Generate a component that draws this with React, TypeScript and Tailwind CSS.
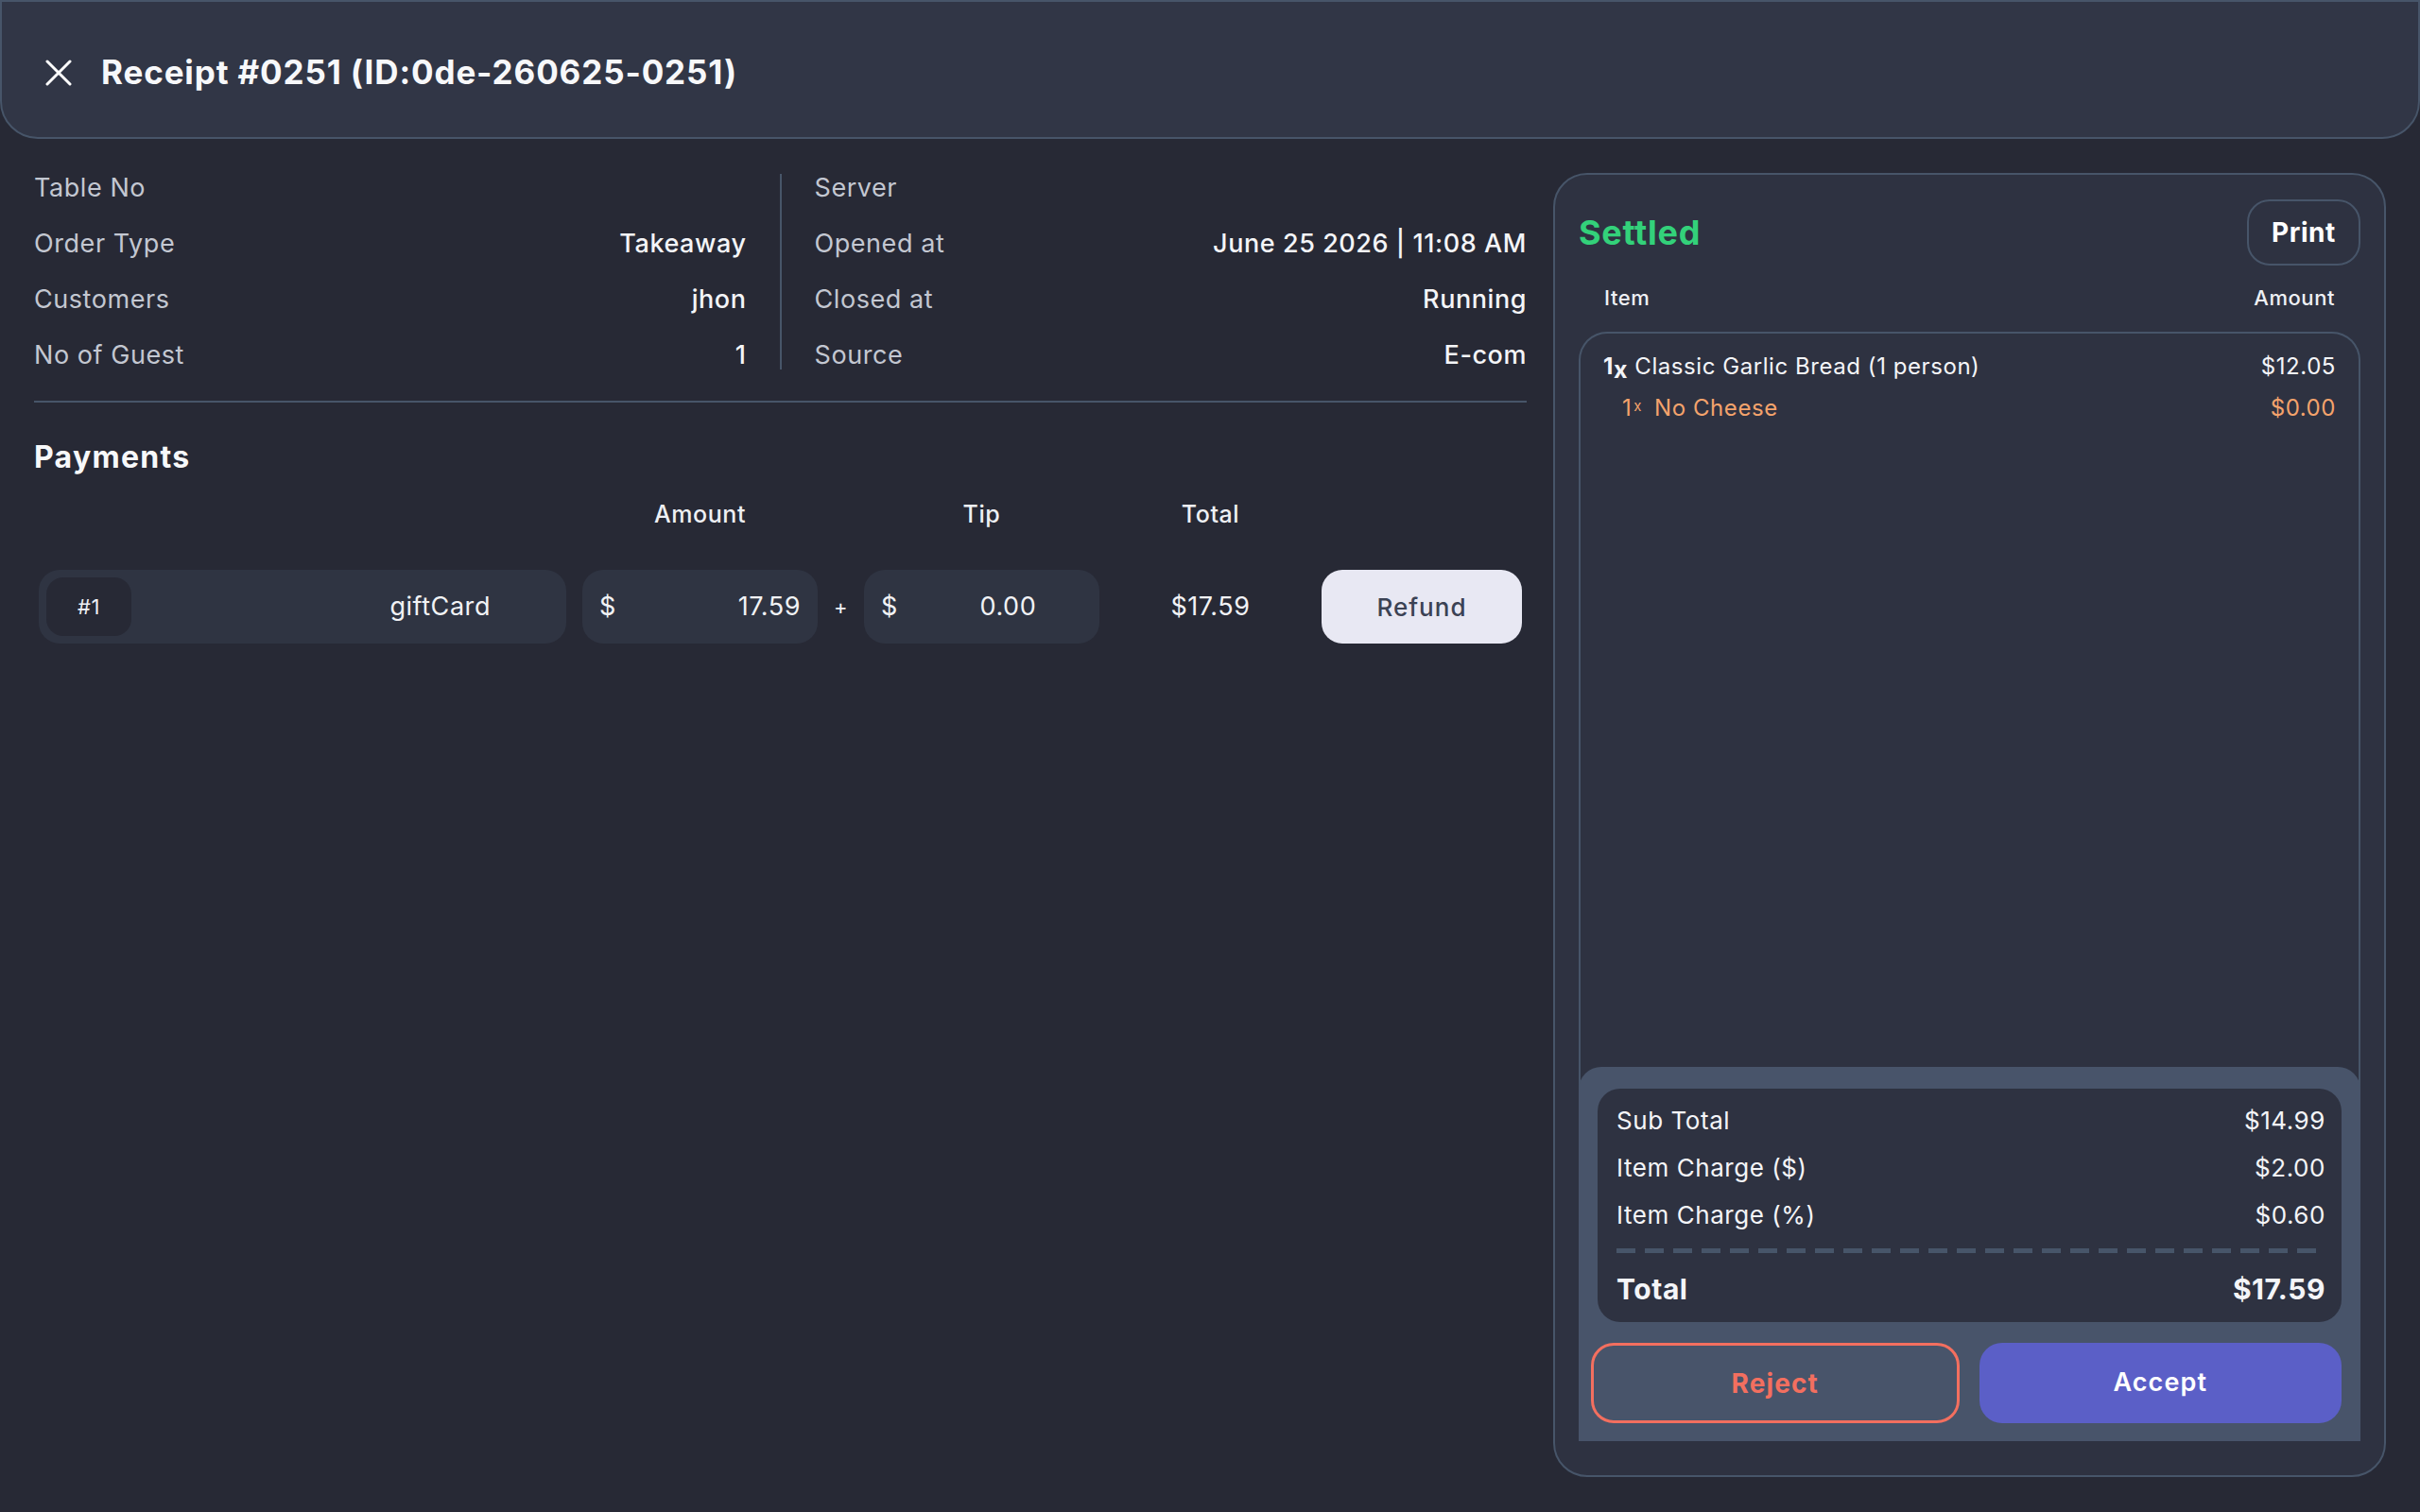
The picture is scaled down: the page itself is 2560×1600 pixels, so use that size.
import React from "react";

const font = { fontFamily: 'Inter, "Noto Sans", sans-serif' };

function InfoRow({ label, value }: { label: string; value?: string }) {
  return (
    <div className="flex items-center justify-between h-[30px] leading-[30px]">
      <span className="text-[#c3c7d1]">{label}</span>
      <span className="text-[#f4f5f8] font-medium">{value ?? ""}</span>
    </div>
  );
}

export default function App() {
  return (
    <div
      className="w-[2560px] h-[1600px] bg-[#272935] flex flex-col overflow-hidden text-white tracking-[0.035em]"
      style={font}
    >
      {/* Header */}
      <div className="h-[147px] shrink-0 bg-[#313646] border-[2px] border-[#475569] rounded-b-[40px] flex items-center pl-[46px] pt-[6px] gap-[31px]">
        <svg width="28" height="28" viewBox="0 0 28 28" className="shrink-0">
          <path d="M2 2 L26 26 M26 2 L2 26" stroke="#ffffff" strokeWidth="3" strokeLinecap="round" />
        </svg>
        <h1 className="text-[35px] font-bold tracking-[0.025em] text-[#f7f8fa]">Receipt #0251 (ID:0de-260625-0251)</h1>
      </div>

      {/* Main */}
      <div className="flex-1 flex px-[36px] pt-[36px] pb-[37px] gap-[28px] min-h-0">
        {/* Left */}
        <div className="w-[1579px] shrink-0 flex flex-col">
          <div className="flex text-[27px] pt-[1px]">
            <div className="flex-1 flex flex-col gap-[29px]">
              <InfoRow label="Table No" />
              <InfoRow label="Order Type" value="Takeaway" />
              <InfoRow label="Customers" value="jhon" />
              <InfoRow label="No of Guest" value="1" />
            </div>
            <div className="w-[2px] bg-[#475569] mx-[35px] self-stretch" />
            <div className="flex-1 flex flex-col gap-[29px]">
              <InfoRow label="Server" />
              <InfoRow label="Opened at" value="June 25 2026 | 11:08 AM" />
              <InfoRow label="Closed at" value="Running" />
              <InfoRow label="Source" value="E-com" />
            </div>
          </div>
          <div className="h-[2px] bg-[#475569] mt-[33px]" />

          <h2 className="mt-[38px] text-[32px] leading-[40px] font-bold tracking-[0.04em] text-[#f7f8fa]">Payments</h2>

          {/* Column headers */}
          <div className="mt-[25px] flex items-center px-[5px] text-[25px] leading-[30px] font-medium text-[#eef0f4]">
            <div className="w-[558px]" />
            <div className="w-[17px]" />
            <div className="w-[249px] text-center">Amount</div>
            <div className="w-[49px]" />
            <div className="w-[249px] text-center">Tip</div>
            <div className="flex-1 text-center">Total</div>
            <div className="w-[212px]" />
          </div>

          {/* Payment row */}
          <div className="mt-[44px] flex items-center px-[5px] text-[27px]">
            <div className="w-[558px] h-[78px] rounded-[22px] bg-[#2f3442] flex items-center pl-[8px]">
              <div className="w-[90px] h-[62px] rounded-[18px] bg-[#272935] flex items-center justify-center text-[22px] text-[#eef0f4]">
                #1
              </div>
              <span className="ml-auto mr-[80px] text-[#f1f2f5]">giftCard</span>
            </div>
            <div className="w-[17px]" />
            <div className="w-[249px] h-[78px] rounded-[22px] bg-[#2f3442] flex items-center pl-[18px] pr-[18px]">
              <span className="text-[#f1f2f5]">$</span>
              <span className="ml-auto text-[#f1f2f5]">17.59</span>
            </div>
            <div className="w-[49px] text-center text-[22px] text-[#f1f2f5]">+</div>
            <div className="w-[249px] h-[78px] rounded-[22px] bg-[#2f3442] flex items-center pl-[18px]">
              <span className="text-[#f1f2f5]">$</span>
              <span className="flex-1 text-center ml-[20px] text-[#f1f2f5]">0.00</span>
            </div>
            <div className="flex-1 text-center text-[#f1f2f5]">$17.59</div>
            <button className="w-[212px] h-[78px] rounded-[22px] bg-[#e8e8f3] text-[#3b4254] text-[26px] font-medium tracking-[0.04em]">
              Refund
            </button>
          </div>
        </div>

        {/* Right card */}
        <div className="flex-1 flex flex-col rounded-[36px] border-[2px] border-[#475569] bg-[#2e3241] px-[25px] pt-[26px] pb-[36px]">
          <div className="flex items-center justify-between">
            <span className="text-[36px] font-bold text-[#33d17a] tracking-[0.02em]">Settled</span>
            <button className="w-[120px] h-[70px] rounded-[24px] border-[2px] border-[#475569] text-[28px] font-bold text-white">
              Print
            </button>
          </div>
          <div className="mt-[20px] flex justify-between px-[27px] text-[22px] leading-[28px] font-medium text-[#eef0f4]">
            <span>Item</span>
            <span>Amount</span>
          </div>
          <div className="mt-[22px] flex-1 flex flex-col min-h-0">
            <div className="flex-1 border-[2px] border-b-0 border-[#475569] rounded-t-[30px] px-[24px] pt-[20px] text-[24px]">
              <div className="flex items-center justify-between h-[30px]">
                <span className="text-[#f4f5f8]">
                  <span className="font-bold">
                    1<span className="relative top-[4px] text-[25px]">x</span>
                  </span>{" "}
                  Classic Garlic Bread (1 person)
                </span>
                <span className="text-[#f4f5f8]">$12.05</span>
              </div>
              <div className="flex items-center justify-between h-[30px] mt-[14px] text-[#f4a36c]">
                <span className="pl-[20px]">
                  1<span className="text-[15px] relative -top-[5px] ml-[2px]">x</span>
                  <span className="ml-[13px]">No Cheese</span>
                </span>
                <span>$0.00</span>
              </div>
            </div>
            <div className="relative -mt-[30px] bg-[#48546a] rounded-t-[24px] pt-[23px] pb-[19px]">
              <div className="mx-[20px] bg-[#2e3241] rounded-[24px] pl-[20px] pr-[17px] pt-[19px] pb-[17px] text-[26px] text-[#f4f5f8]">
                <div className="flex flex-col gap-[20px]">
                  <div className="flex justify-between leading-[30px]">
                    <span>Sub Total</span>
                    <span>$14.99</span>
                  </div>
                  <div className="flex justify-between leading-[30px]">
                    <span>Item Charge ($)</span>
                    <span>$2.00</span>
                  </div>
                  <div className="flex justify-between leading-[30px]">
                    <span>Item Charge (%)</span>
                    <span>$0.60</span>
                  </div>
                </div>
                <div className="mt-[20px] h-[5px] mr-[8px] bg-[repeating-linear-gradient(90deg,#475569_0px,#475569_20px,transparent_20px,transparent_30px)]" />
                <div className="mt-[20px] flex justify-between leading-[36px] text-[30px] font-bold">
                  <span>Total</span>
                  <span>$17.59</span>
                </div>
              </div>
              <div className="mt-[22px] flex gap-[21px] pl-[13px] pr-[20px]">
                <button className="flex-1 h-[85px] rounded-[24px] border-[3px] border-[#f36f5f] text-[#f36f5f] text-[28px] font-bold tracking-[0.04em]">
                  Reject
                </button>
                <button className="flex-1 h-[85px] rounded-[24px] bg-[#5b5fc7] text-white text-[27px] font-semibold tracking-[0.04em]">
                  Accept
                </button>
              </div>
            </div>
          </div>
        </div>
      </div>
    </div>
  );
}
